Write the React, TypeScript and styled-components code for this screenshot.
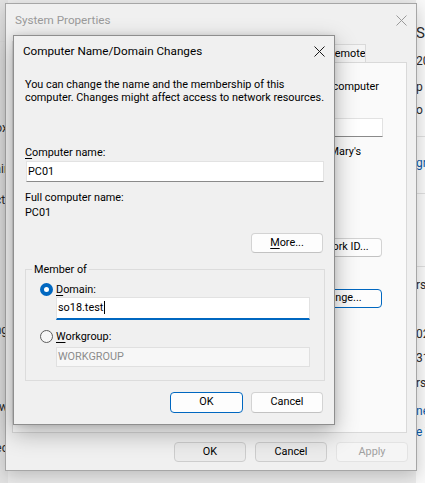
import React from "react";
import styled, { createGlobalStyle, css } from "styled-components";

const UI_FONT = `Roboto, "Noto Sans", "Liberation Sans", Arial, sans-serif`;
const UI_SIZE = 10.85;

const GlobalStyle = createGlobalStyle`
  *, *::before, *::after { box-sizing: border-box; }
  html, body { margin: 0; padding: 0; }
  body {
    font-family: ${UI_FONT};
    font-size: ${UI_SIZE}px;
    color: #000;
    background: #ececec;
  }
`;

const Desktop = styled.main`
  position: relative;
  width: 425px;
  height: 483px;
  overflow: hidden;
`;

/* ---------- app in the background ---------- */
const BackApp = styled.div`
  position: absolute;
  inset: 0;
  display: grid;
  grid-template-columns: 8px 1fr 9px;
  background: #ebebeb;
`;

const NavStrip = styled.div`
  display: flex;
  flex-direction: column;
  align-items: flex-end;
  background: #e2e2e2;
  color: #2b2b2b;
  white-space: nowrap;
`;

const ContentStrip = styled.div`
  display: flex;
  flex-direction: column;
  align-items: flex-start;
  background: #f9f9f9;
  color: #2b2b2b;
  white-space: nowrap;
`;

const BgText = styled.span<{ $mt: number; $size?: number; $link?: boolean }>`
  display: block;
  margin-top: ${(p) => p.$mt}px;
  font-size: ${(p) => p.$size ?? 12}px;
  line-height: 16px;
  color: ${(p) => (p.$link ? "#0b5aa8" : "#2b2b2b")};
`;

const BgRule = styled.div<{ $mt: number }>`
  align-self: stretch;
  margin-top: ${(p) => p.$mt}px;
  height: 1px;
  background: #dedede;
`;

/* ---------- windows ---------- */
const Window = styled.section<{ $active?: boolean }>`
  position: absolute;
  display: flex;
  flex-direction: column;
  background: #f0f0f0;
  border: 1px solid ${(p) => (p.$active ? "#8e8e8e" : "#a6a6a6")};
  box-shadow: ${(p) =>
    p.$active
      ? "0 8px 22px rgba(0,0,0,0.30), 0 0 6px rgba(0,0,0,0.10)"
      : "0 5px 16px rgba(0,0,0,0.20)"};
`;

const SystemWindow = styled(Window)`
  left: 5px;
  top: 3px;
  width: 412px;
  height: 468px;
`;

const NameDialog = styled(Window)`
  left: 13px;
  top: 35px;
  width: 322px;
  height: 390px;
`;

const TitleBar = styled.header<{ $h: number; $inactive?: boolean }>`
  display: flex;
  align-items: center;
  flex: none;
  height: ${(p) => p.$h}px;
  padding-left: 9px;
  color: ${(p) => (p.$inactive ? "#9a9a9a" : "#000")};
`;

const TitleText = styled.span`
  flex: 1;
  font-size: 11.7px;
  line-height: 15px;
`;

const CloseButton = styled.span`
  display: flex;
  align-items: center;
  justify-content: center;
  width: 30px;
  height: 100%;
`;

const CloseIcon = ({ color }: { color: string }) => (
  <svg width="11" height="11" viewBox="0 0 11 11" aria-hidden="true">
    <path d="M0.5 0.5 L10.5 10.5 M10.5 0.5 L0.5 10.5" stroke={color} strokeWidth="1" fill="none" />
  </svg>
);

/* ---------- System Properties body ---------- */
const TabStrip = styled.div`
  display: flex;
  align-items: flex-end;
  height: 21px;
  margin: 5px 9px 0 6px;
  flex: none;
`;

const Tab = styled.div<{ $w: number; $active?: boolean }>`
  display: flex;
  align-items: center;
  width: ${(p) => p.$w}px;
  height: ${(p) => (p.$active ? 21 : 18)}px;
  padding-left: 1px;
  border: 1px solid #d9d9d9;
  border-bottom: none;
  background: ${(p) => (p.$active ? "#fafafa" : "#f4f4f4")};
  white-space: nowrap;
  overflow: hidden;
  line-height: 15px;
`;

const TabPanel = styled.div`
  display: flex;
  flex-direction: column;
  height: 371px;
  margin: 0 9px 0 6px;
  padding: 16px 23px 0 12px;
  border: 1px solid #d9d9d9;
  background: #fafafa;
  overflow: hidden;
  flex: none;
`;

const EndLine = styled.div<{ $end: number; $mt?: number }>`
  display: flex;
  justify-content: flex-end;
  white-space: nowrap;
  line-height: 15px;
  margin-top: ${(p) => p.$mt ?? 0}px;
  padding-right: ${(p) => p.$end}px;
`;

const TextLine = styled.div<{ $indent: number; $mt?: number }>`
  white-space: nowrap;
  line-height: 15px;
  margin-top: ${(p) => p.$mt ?? 0}px;
  padding-left: ${(p) => p.$indent}px;
`;

const FormRow = styled.div<{ $mt?: number }>`
  display: flex;
  align-items: center;
  margin-top: ${(p) => p.$mt ?? 0}px;
  line-height: 15px;
`;

const RowLabel = styled.span<{ $w: number }>`
  flex: none;
  width: ${(p) => p.$w}px;
  white-space: nowrap;
`;

const ActionRow = styled.div<{ $mt: number }>`
  display: flex;
  align-items: flex-start;
  margin-top: ${(p) => p.$mt}px;
  padding-right: 1px;
`;

const ActionText = styled.span`
  flex: none;
  white-space: nowrap;
  line-height: 15px;
  padding-left: 40px;
`;

const ActionButtonSlot = styled.div`
  margin-left: auto;
  padding-top: 5.5px;
`;

const Footer = styled.div<{ $mt: number }>`
  display: flex;
  justify-content: flex-end;
  gap: 9px;
  margin-top: ${(p) => p.$mt}px;
  padding-right: 8px;
  flex: none;
`;

/* ---------- controls ---------- */
type BtnVariant = "normal" | "focus" | "inactive" | "disabled";

const PushButton = styled.button<{ $w: number; $h: number; $variant?: BtnVariant }>`
  display: flex;
  align-items: center;
  justify-content: center;
  width: ${(p) => p.$w}px;
  height: ${(p) => p.$h}px;
  padding: 0;
  font-family: ${UI_FONT};
  font-size: ${UI_SIZE}px;
  line-height: 1;
  color: #000;
  border-radius: 4px;
  border: 1px solid #d3d3d3;
  border-bottom-color: #c2c2c2;
  background: #fdfdfd;
  ${(p) =>
    p.$variant === "focus" &&
    css`
      border-color: #0067c0;
    `}
  ${(p) =>
    p.$variant === "inactive" &&
    css`
      background: #ebebeb;
      border-color: #cdcdcd;
    `}
  ${(p) =>
    p.$variant === "disabled" &&
    css`
      background: #f5f5f5;
      border-color: #e3e3e3;
      color: #a0a0a0;
    `}
`;

const Key = styled.span`
  text-decoration: underline;
  text-underline-offset: 2px;
`;

type EditVariant = "normal" | "focus" | "disabled";

const EditBox = styled.div<{ $h: number; $w?: number; $ml?: number; $mt?: number; $variant?: EditVariant }>`
  display: flex;
  align-items: center;
  flex: ${(p) => (p.$w ? "none" : "1")};
  width: ${(p) => (p.$w ? `${p.$w}px` : "auto")};
  height: ${(p) => p.$h}px;
  margin-top: ${(p) => p.$mt ?? 0}px;
  margin-left: ${(p) => p.$ml ?? 0}px;
  padding: 0 0 1px 1px;
  background: #fff;
  border: 1px solid #e2e2e2;
  border-bottom-color: #8a8a8a;
  white-space: nowrap;
  line-height: 15px;
  ${(p) =>
    p.$variant === "focus" &&
    css`
      border-bottom: 2px solid #0067c0;
    `}
  ${(p) =>
    p.$variant === "disabled" &&
    css`
      background: #f7f7f7;
      border-color: #e0e0e0;
      color: #8c8c8c;
    `}
`;

const Caret = styled.span`
  display: inline-block;
  width: 1px;
  height: 13px;
  margin-left: 1px;
  background: #000;
`;

/* ---------- dialog body ---------- */
const DialogBody = styled.div`
  display: flex;
  flex-direction: column;
  flex: 1;
  padding: 10.5px 10px 11px 11px;
`;

const Paragraph = styled.p`
  margin: 0;
  white-space: nowrap;
  line-height: 13px;
`;

const FieldLabel = styled.div<{ $mt?: number }>`
  margin-top: ${(p) => p.$mt ?? 0}px;
  line-height: 15px;
  white-space: nowrap;
`;

const ButtonRow = styled.div<{ $mt: number }>`
  display: flex;
  justify-content: flex-end;
  gap: 8px;
  margin-top: ${(p) => p.$mt}px;
  padding-right: 1px;
`;

const GroupBox = styled.fieldset`
  margin: 9px -1px 0 0;
  padding: 4.5px 14px 13px 14px;
  min-width: 0;
  border: 1px solid #dcdcdc;
`;

const GroupLegend = styled.legend`
  padding: 0 2px;
  margin-left: -8px;
  line-height: 15px;
`;

const RadioRow = styled.div<{ $mt?: number }>`
  display: flex;
  align-items: center;
  gap: 3px;
  height: 15px;
  margin-top: ${(p) => p.$mt ?? 0}px;
`;

const RadioDot = styled.span<{ $checked?: boolean }>`
  flex: none;
  width: 13px;
  height: 13px;
  border-radius: 50%;
  ${(p) =>
    p.$checked
      ? css`
          background: #fff;
          border: 4px solid #0067c0;
        `
      : css`
          background: #f7f7f7;
          border: 1px solid #5e5e5e;
        `}
`;

export default function App() {
  return (
    <Desktop>
      <GlobalStyle />

      <BackApp>
        <NavStrip>
          <BgRule $mt={41} />
          <BgText $mt={78}>Box</BgText>
          <BgText $mt={25}>Pair</BgText>
          <BgText $mt={15}>Acti</BgText>
          <BgText $mt={114}>Lang</BgText>
          <BgText $mt={61}>View</BgText>
          <BgText $mt={25}>Rec</BgText>
        </NavStrip>
        <div />
        <ContentStrip>
          <BgText $mt={25} $size={15}>SP</BgText>
          <BgText $mt={12}>20</BgText>
          <BgText $mt={10}>p</BgText>
          <BgText $mt={7}>o</BgText>
          <BgRule $mt={18} />
          <BgText $mt={18} $link>gr</BgText>
          <BgRule $mt={22} />
          <BgRule $mt={72} />
          <BgText $mt={10}>rs</BgText>
          <BgText $mt={33}>02</BgText>
          <BgText $mt={8}>31</BgText>
          <BgText $mt={9}>rs</BgText>
          <BgText $mt={12} $link>ne</BgText>
          <BgText $mt={5} $link>e T</BgText>
        </ContentStrip>
      </BackApp>

      <SystemWindow>
        <TitleBar $h={32} $inactive>
          <TitleText>System Properties</TitleText>
          <CloseButton>
            <CloseIcon color="#9a9a9a" />
          </CloseButton>
        </TitleBar>
        <TabStrip>
          <Tab $w={92} $active>Computer Name</Tab>
          <Tab $w={60}>Hardware</Tab>
          <Tab $w={62}>Advanced</Tab>
          <Tab $w={100}>System Protection</Tab>
          <Tab $w={40}>Remote</Tab>
        </TabStrip>
        <TabPanel>
          <EndLine $end={4}>Windows uses the following information to identify your computer</EndLine>
          <TextLine $indent={40}>on the network.</TextLine>
          <FormRow $mt={9}>
            <RowLabel $w={105}>Computer description:</RowLabel>
            <EditBox $h={19} />
          </FormRow>
          <EndLine $mt={7} $end={22}>For example: "Kitchen Computer" or "Mary's</EndLine>
          <TextLine $indent={105}>Computer".</TextLine>
          <FormRow $mt={10}>
            <RowLabel $w={105}>Full computer name:</RowLabel>
            <span>PC01</span>
          </FormRow>
          <FormRow>
            <RowLabel $w={105}>Workgroup:</RowLabel>
            <span>WORKGROUP</span>
          </FormRow>
          <ActionRow $mt={18.5}>
            <ActionText>
              To use a wizard to join a domain or
              <br />
              workgroup, click Network ID.
            </ActionText>
            <ActionButtonSlot>
              <PushButton $w={88} $h={19}>Network ID...</PushButton>
            </ActionButtonSlot>
          </ActionRow>
          <ActionRow $mt={21}>
            <ActionText>
              To rename this computer or change its
              <br />
              domain or workgroup, click Change.
            </ActionText>
            <ActionButtonSlot>
              <PushButton $w={86} $h={19} $variant="focus">Change...</PushButton>
            </ActionButtonSlot>
          </ActionRow>
        </TabPanel>
        <Footer $mt={9}>
          <PushButton $w={72} $h={20} $variant="inactive">OK</PushButton>
          <PushButton $w={72} $h={20} $variant="inactive">Cancel</PushButton>
          <PushButton $w={72} $h={20} $variant="disabled">Apply</PushButton>
        </Footer>
      </SystemWindow>

      <NameDialog $active>
        <TitleBar $h={31}>
          <TitleText>Computer Name/Domain Changes</TitleText>
          <CloseButton>
            <CloseIcon color="#1a1a1a" />
          </CloseButton>
        </TitleBar>
        <DialogBody>
          <Paragraph>
            You can change the name and the membership of this
            <br />
            computer. Changes might affect access to network resources.
          </Paragraph>
          <FieldLabel $mt={41}>
            <Key>C</Key>omputer name:
          </FieldLabel>
          <EditBox $h={21} $mt={1.5} $ml={1}>PC01</EditBox>
          <FieldLabel $mt={8}>Full computer name:</FieldLabel>
          <FieldLabel>PC01</FieldLabel>
          <ButtonRow $mt={13}>
            <PushButton $w={72} $h={20}>
              <Key>M</Key>ore...
            </PushButton>
          </ButtonRow>
          <GroupBox>
            <GroupLegend>Member of</GroupLegend>
            <RadioRow>
              <RadioDot $checked />
              <span>
                <Key>D</Key>omain:
              </span>
            </RadioRow>
            <EditBox $h={23} $w={254} $ml={16} $mt={0.5} $variant="focus">
              so18.test
              <Caret />
            </EditBox>
            <RadioRow $mt={8.5}>
              <RadioDot />
              <span>
                <Key>W</Key>orkgroup:
              </span>
            </RadioRow>
            <EditBox $h={20} $w={254} $ml={16} $mt={3.5} $variant="disabled">
              WORKGROUP
            </EditBox>
          </GroupBox>
          <ButtonRow $mt={11}>
            <PushButton $w={73} $h={21} $variant="focus">OK</PushButton>
            <PushButton $w={72} $h={21}>Cancel</PushButton>
          </ButtonRow>
        </DialogBody>
      </NameDialog>
    </Desktop>
  );
}
